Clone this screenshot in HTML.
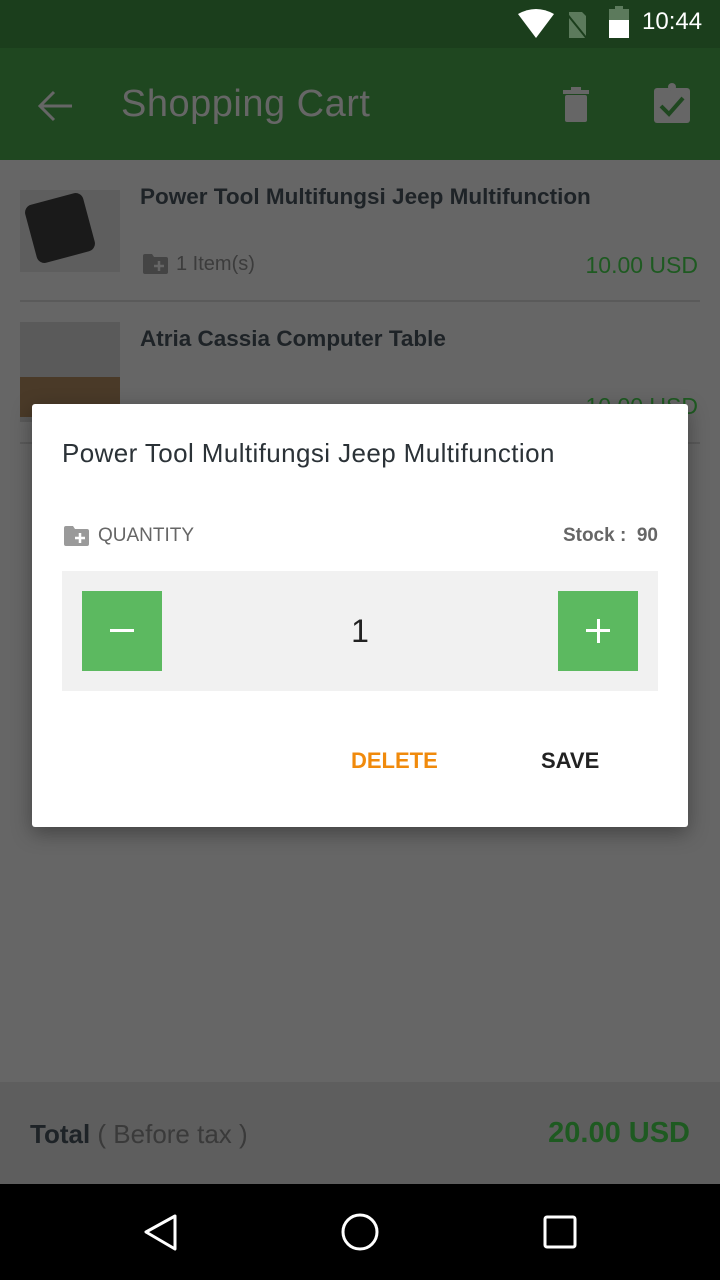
<!DOCTYPE html>
<html><head><meta charset="utf-8"><style>
*{margin:0;padding:0;box-sizing:border-box}
body{width:720px;height:1280px;position:relative;overflow:hidden;background:#666;font-family:"Liberation Sans",sans-serif}
.abs{position:absolute}
</style></head><body>
<div class="abs" style="left:0;top:0;width:720px;height:48px;background:#1b3e1c"></div>
<svg class="abs" style="left:516px;top:8px" width="40" height="32" viewBox="0 0 40 32"><path d="M2 6 Q20 -4 38 6 L20 30 Z" fill="#fff"/></svg>
<svg class="abs" style="left:564px;top:10px" width="26" height="30" viewBox="0 0 26 30"><path d="M5 2 H18 L22 6 V28 H5 Z" fill="#5c7a5c"/><path d="M3 4 L24 30" stroke="#1b3e1c" stroke-width="2"/></svg>
<div class="abs" style="left:609px;top:9px;width:20px;height:29px;background:#fff"></div>
<div class="abs" style="left:609px;top:9px;width:20px;height:11px;background:#5c7a5c"></div>
<div class="abs" style="left:615px;top:6px;width:8px;height:4px;background:#5c7a5c"></div>
<div class="abs" style="left:642px;top:8px;color:#fff;font-size:24px">10:44</div>
<div class="abs" style="left:0;top:48px;width:720px;height:112px;background:#1f4720"></div>
<svg class="abs" style="left:36px;top:86px" width="40" height="40" viewBox="0 0 40 40"><path d="M36 20 H6 M18 6 L4 20 L18 34" stroke="#666" stroke-width="3" fill="none"/></svg>
<div class="abs" style="left:121px;top:83px;color:#666;font-size:38px;letter-spacing:0.5px">Shopping Cart</div>
<svg class="abs" style="left:560px;top:84px" width="32" height="40" viewBox="0 0 32 40"><rect x="3" y="6" width="26" height="4" fill="#666"/><rect x="11" y="3" width="10" height="4" fill="#666"/><rect x="5" y="11" width="22" height="27" rx="2" fill="#666"/></svg>
<svg class="abs" style="left:652px;top:82px" width="40" height="42" viewBox="0 0 40 42"><rect x="2" y="6" width="36" height="35" rx="3" fill="#666"/><circle cx="20" cy="5" r="4" fill="#666"/><path d="M9 24 L17 32 L31 16" stroke="#1f4720" stroke-width="4" fill="none"/></svg>

<div class="abs" style="left:20px;top:190px;width:100px;height:82px;background:#5e5e5e"><div style="margin:8px 0 0 10px;width:60px;height:60px;background:#1a1a1a;border-radius:8px;transform:rotate(-15deg)"></div></div>
<div class="abs" style="left:140px;top:184px;color:#1e2327;font-size:22.5px;font-weight:bold">Power Tool Multifungsi Jeep Multifunction</div>
<svg class="abs" style="left:143px;top:253px" width="26" height="22" viewBox="0 0 26 22"><path d="M0 3 Q0 1 2 1 H9 L11 4 H23 Q25 4 25 6 V19 Q25 21 23 21 H2 Q0 21 0 19 Z" fill="#444"/><path d="M16 8 V18 M11 13 H21" stroke="#666" stroke-width="2.5"/></svg>
<div class="abs" style="left:176px;top:253px;color:#3c3c3c;font-size:20px">1 Item(s)</div>
<div class="abs" style="right:22px;top:252px;color:#1e5a21;font-size:23px">10.00 USD</div>
<div class="abs" style="left:20px;top:300px;width:680px;height:2px;background:#5a5a5a"></div>
<div class="abs" style="left:20px;top:322px;width:100px;height:100px;background:#5a5a5a"><div style="margin-top:55px;height:40px;background:#4a3a28"></div></div>
<div class="abs" style="left:140px;top:326px;color:#1e2327;font-size:22.5px;font-weight:bold">Atria Cassia Computer Table</div>
<div class="abs" style="right:22px;top:393px;color:#1e5a21;font-size:23px">10.00 USD</div>
<div class="abs" style="left:20px;top:442px;width:680px;height:2px;background:#5a5a5a"></div>

<div class="abs" style="left:32px;top:404px;width:656px;height:423px;background:#fff;border-radius:3px;box-shadow:0 6px 20px rgba(0,0,0,.35)">
<div class="abs" style="left:30px;top:34px;color:#2b3237;font-size:26px;letter-spacing:0.4px">Power Tool Multifungsi Jeep Multifunction</div>
<svg class="abs" style="left:32px;top:121px" width="26" height="22" viewBox="0 0 26 22"><path d="M0 3 Q0 1 2 1 H9 L11 4 H23 Q25 4 25 6 V19 Q25 21 23 21 H2 Q0 21 0 19 Z" fill="#9a9a9a"/><path d="M16 8 V18 M11 13 H21" stroke="#fff" stroke-width="2.5"/></svg>
<div class="abs" style="left:66px;top:121px;color:#666;font-size:19px">QUANTITY</div>
<div class="abs" style="right:30px;top:121px;color:#666;font-size:19px;font-weight:bold">Stock :&nbsp; 90</div>
<div class="abs" style="left:30px;top:167px;width:596px;height:120px;background:#f1f1f1">
<div class="abs" style="left:20px;top:20px;width:80px;height:80px;background:#5cb960"><div style="margin:38px 0 0 28px;width:24px;height:3px;background:#fff"></div></div>
<div class="abs" style="left:0;width:596px;top:42px;text-align:center;color:#222;font-size:32px">1</div>
<div class="abs" style="left:496px;top:20px;width:80px;height:80px;background:#5cb960"><div class="abs" style="left:28px;top:38px;width:24px;height:3px;background:#fff"></div><div class="abs" style="left:38.5px;top:28px;width:3px;height:24px;background:#fff"></div></div>
</div>
<div class="abs" style="left:319px;top:344px;color:#f08a0c;font-size:22px;font-weight:bold">DELETE</div>
<div class="abs" style="left:509px;top:344px;color:#222;font-size:22px;font-weight:bold">SAVE</div>
</div>

<div class="abs" style="left:0;top:1082px;width:720px;height:102px;background:#5e5e5e"></div>
<div class="abs" style="left:30px;top:1119px;font-size:26px;color:#3a3a3a"><b style="color:#1e2327">Total</b> ( Before tax )</div>
<div class="abs" style="right:30px;top:1117px;font-size:29px;font-weight:bold;color:#1e5a21">20.00 USD</div>
<div class="abs" style="left:0;top:1184px;width:720px;height:96px;background:#000"></div>
<svg class="abs" style="left:0;top:1184px" width="720" height="96" viewBox="0 0 720 96"><path d="M175 32 L146 48 L175 65 Z" stroke="#fff" stroke-width="3" fill="none" stroke-linejoin="round"/><circle cx="360" cy="48" r="17" stroke="#fff" stroke-width="3" fill="none"/><rect x="545" y="33" width="30" height="30" rx="2" stroke="#fff" stroke-width="3" fill="none"/></svg>
</body></html>
